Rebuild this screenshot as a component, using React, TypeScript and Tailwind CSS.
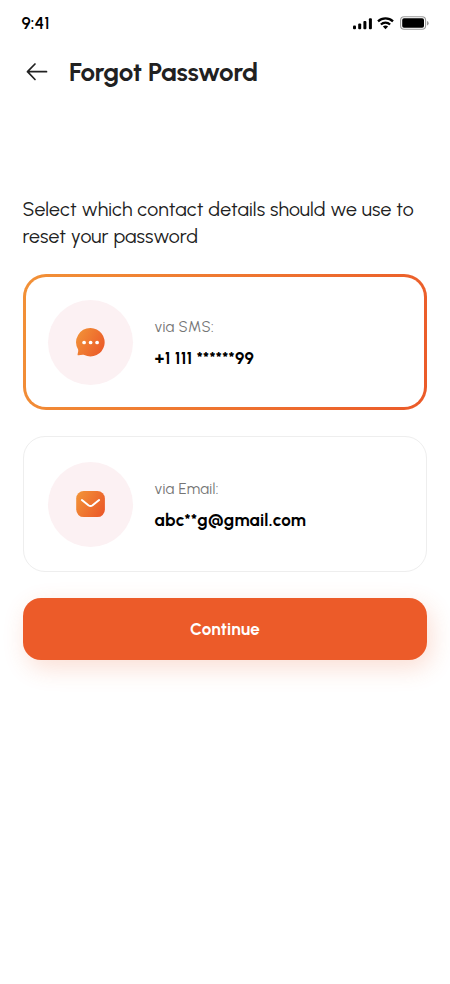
import React from "react";

function StatusBar() {
  return (
    <div className="flex h-[46px] items-center justify-between pl-[21.500px] pr-[21px]">
      <span className="text-[17px] leading-[20px] font-semibold tracking-[0.100px] text-black">9:41</span>
      <svg width="77" height="16" viewBox="0 0 77 16" fill="#000">
        <rect x="1" y="10.5" width="3" height="3.7" rx="1" />
        <rect x="6.2" y="8.5" width="3" height="5.7" rx="1" />
        <rect x="11.4" y="6" width="3" height="8.2" rx="1" />
        <rect x="16.9" y="3.3" width="3" height="10.9" rx="1" />
        <g fill="none" stroke="#000" strokeWidth="2.3">
          <path d="M26 6.400a11 11 0 0 1 15 0" />
          <path d="M28.900 9.500a6.700 6.700 0 0 1 9.200 0" />
        </g>
        <path d="M30.900 11.600a3.800 3.800 0 0 1 5.200 0l-2.600 2.600z" />
        <rect x="48.6" y="1.700" width="25" height="12.6" rx="3.5" fill="none" stroke="#000" strokeOpacity=".4" strokeWidth="1.1" />
        <rect x="50.2" y="3.300" width="21.8" height="9.4" rx="1.8" />
        <path d="M75 6v4.400a2.300 2.300 0 0 0 0-4.400z" opacity=".4" />
      </svg>
    </div>
  );
}

function ChatIcon() {
  return (
    <svg width="31" height="31" viewBox="-0.5 -0.5 31 31">
      <defs>
        <linearGradient id="chat" x1="0" y1="0.2" x2="1" y2="0.75">
          <stop stopColor="#f29137" />
          <stop offset="1" stopColor="#eb5a29" />
        </linearGradient>
      </defs>
      <path d="M15.100.600A14.200 14.200 0 1 1 8.800 27.600C7 26.800 4.300 28.100 2.300 27.700C1.400 27.200 3.400 23.900 2.500 21.800A14.200 14.200 0 0 1 15.100.600Z" fill="url(#chat)" />
      <g fill="#fff">
        <circle cx="8.600" cy="15" r="1.850" />
        <circle cx="15.100" cy="15" r="1.850" />
        <circle cx="21.600" cy="15" r="1.850" />
      </g>
    </svg>
  );
}

function MailIcon() {
  return (
    <svg width="31" height="31" viewBox="-0.5 -0.5 31 31">
      <defs>
        <linearGradient id="mail" x1="0" y1="0.2" x2="1" y2="0.75">
          <stop stopColor="#f29137" />
          <stop offset="1" stopColor="#eb5a29" />
        </linearGradient>
      </defs>
      <rect x=".700" y="1.600" width="28.700" height="26" rx="7.500" fill="url(#mail)" />
      <path d="M6.400 10.500l6.500 5.200q2.100 1.600 4.200 0L23.600 10.500" fill="none" stroke="#fff" strokeWidth="2" strokeLinecap="round" />
    </svg>
  );
}

type ContactProps = { icon: React.ReactNode; label: string; value: string };

function Contact({ icon, label, value }: ContactProps) {
  return (
    <>
      <div className="flex size-[85px] shrink-0 items-center justify-center rounded-full bg-[#fcf1f3]">{icon}</div>
      <div className="ml-[21.600px] pt-[1px] whitespace-nowrap">
        <div className="text-[15px] leading-[20px] tracking-[0.300px] text-[#757575]">{label}</div>
        <div className="mt-[10px] text-[17px] leading-[22px] font-bold tracking-[0.230px] text-black">{value}</div>
      </div>
    </>
  );
}

export default function App() {
  return (
    <main className="h-[984px] w-[450px] overflow-hidden bg-white font-['Urbanist','Lato',sans-serif] text-[#212121]">
      <StatusBar />
      <header className="flex h-[52px] items-center pl-[26px]">
        <svg width="22" height="20" viewBox="0 0 22 20" fill="none" stroke="#212121" strokeWidth="1.700" strokeLinecap="round" strokeLinejoin="round">
          <path d="M20.500 9.700H1.500M9 2L1.500 9.700l7.500 7.800" />
        </svg>
        <h1 className="ml-[21px] text-[26px] leading-[32px] font-bold tracking-[-0.2px] whitespace-nowrap">Forgot Password</h1>
      </header>
      <div className="pr-[22.600px] pl-[22.600px] pt-[98px]">
        <p className="h-[54px] text-[19.500px] leading-[26.500px] tracking-[0.130px] whitespace-nowrap">
          Select which contact details should we use to
          <br />
          reset your password
        </p>
        <div className="mt-6 h-[136.400px] rounded-[23px] bg-[linear-gradient(108deg,#f29137,#eb5a29)] p-[3px]">
          <div className="flex h-full items-center rounded-[20px] bg-white pl-[22.400px]">
            <Contact icon={<ChatIcon />} label="via SMS:" value="+1 111 ******99" />
          </div>
        </div>
        <div className="mt-[25.600px] flex h-[136px] items-center rounded-[22px] border border-[#eeeeee] pt-[1px] pl-[24.400px]">
          <Contact icon={<MailIcon />} label="via Email:" value="abc**g@gmail.com" />
        </div>
        <button className="mt-[26px] h-[62px] w-full rounded-[18px] bg-[#ec5b29] pt-[2px] text-[17px] font-bold tracking-[0.200px] text-white shadow-[4px_8px_24px_rgba(236,91,41,0.2)]">
          Continue
        </button>
      </div>
    </main>
  );
}
